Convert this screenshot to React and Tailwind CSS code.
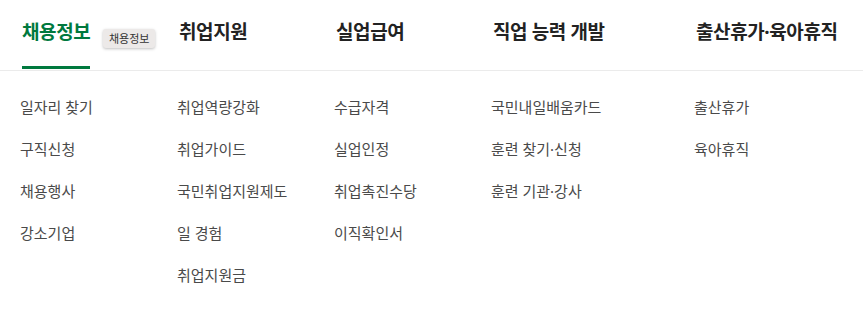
import React from 'react';

const menus = [
  { title: '채용정보', w: 'w-[157px]', items: ['일자리 찾기', '구직신청', '채용행사', '강소기업'], active: true },
  { title: '취업지원', w: 'w-[157px]', items: ['취업역량강화', '취업가이드', '국민취업지원제도', '일 경험', '취업지원금'] },
  { title: '실업급여', w: 'w-[157px]', items: ['수급자격', '실업인정', '취업촉진수당', '이직확인서'] },
  { title: '직업 능력 개발', w: 'w-[203px]', items: ['국민내일배움카드', '훈련 찾기·신청', '훈련 기관·강사'] },
  { title: '출산휴가·육아휴직', w: 'w-[169px]', items: ['출산휴가', '육아휴직'] },
];

export default function App() {
  return (
    <div
      className="w-[863px] h-[313px] bg-white overflow-hidden"
      style={{ fontFamily: '"Noto Sans", "Noto Sans CJK KR", sans-serif' }}
    >
      {/* top tabs */}
      <div className="flex h-[71px] pl-[22px] border-b border-[#ebebeb]">
        {menus.map((m) => (
          <div key={m.title} className={`${m.w} shrink-0 relative`}>
            <div className="relative inline-block h-[70px]">
              <span
                className={`block pt-[17px] text-[19px] leading-[30px] font-bold tracking-[-0.4px] ${
                  m.active ? 'text-[#00793e]' : 'text-[#222]'
                }`}
              >
                {m.title}
              </span>
              {m.active && <span className="absolute left-0 right-0 bottom-[1px] h-[3px] bg-[#00793e]" />}
            </div>
            {m.active && (
              <span className="absolute left-[81px] top-[29px] px-[6px] h-[19px] leading-[19px] rounded-[3px] bg-[#ece9e8] text-[11px] text-[#333] shadow-[0_1px_3px_rgba(0,0,0,0.25)] whitespace-nowrap">
                채용정보
              </span>
            )}
          </div>
        ))}
      </div>

      {/* sub menus */}
      <div className="flex pl-[20px] pt-[25px]">
        {menus.map((m) => (
          <ul key={m.title} className={`${m.w} shrink-0 flex flex-col gap-[20px]`}>
            {m.items.map((it) => (
              <li key={it} className="text-[15px] leading-[22px] text-[#4a4a4a]">
                {it}
              </li>
            ))}
          </ul>
        ))}
      </div>
    </div>
  );
}
